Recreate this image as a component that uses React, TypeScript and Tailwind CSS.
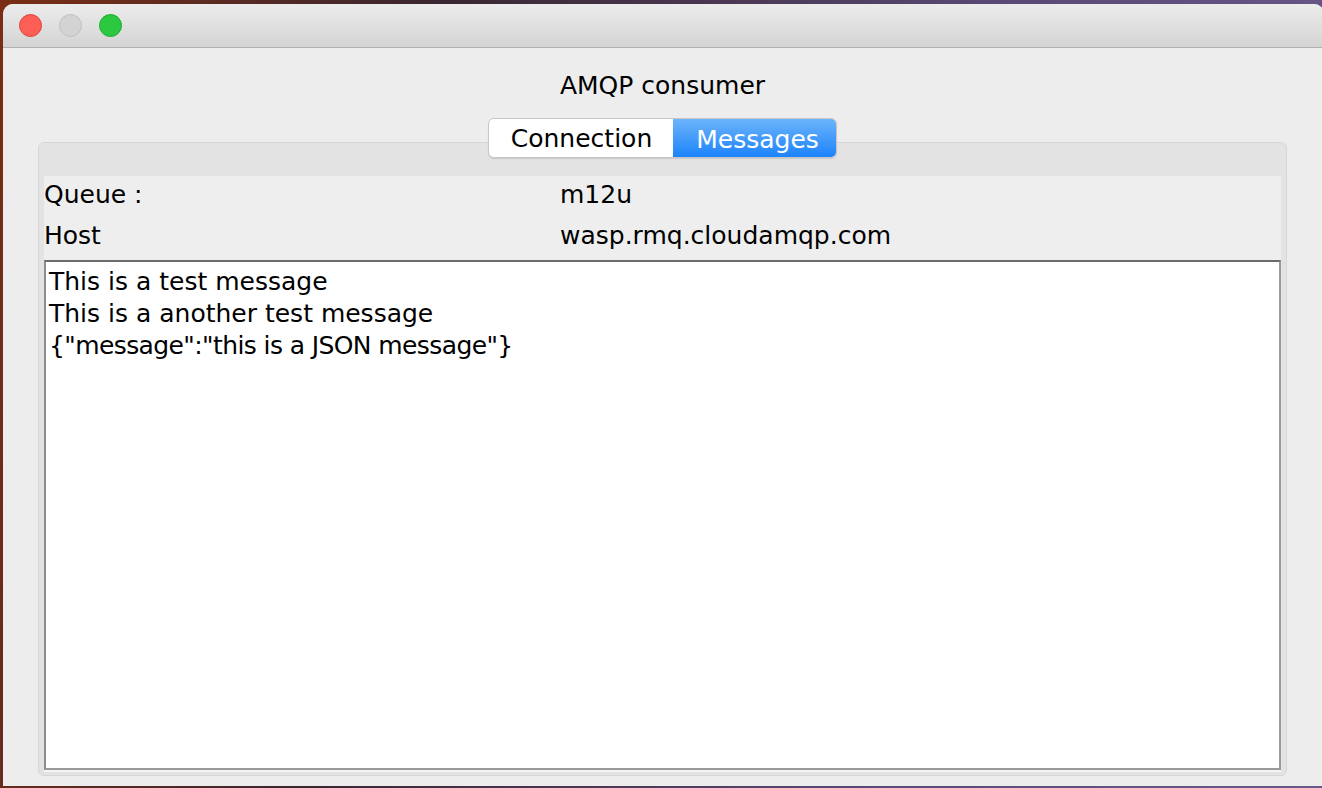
import React from 'react';

// Ventana de escritorio "AMQP consumer" con la pestaña Messages activa

const rows = [
  { label: 'Queue :', value: 'm12u' },
  { label: 'Host', value: 'wasp.rmq.cloudamqp.com' },
];

const messages = [
  'This is a test message',
  'This is a another test message',
  '{"message":"this is a JSON message"}',
];

function TrafficLights() {
  return (
    <div className="flex items-center gap-[17px] pl-[16px]">
      <span className="w-[23px] h-[23px] rounded-full bg-[#fd5f57] border border-[#e0443b]" />
      <span className="w-[23px] h-[23px] rounded-full bg-[#d3d3d3] border border-[#c0c0c0]" />
      <span className="w-[23px] h-[23px] rounded-full bg-[#2bc840] border border-[#1eaa2f]" />
    </div>
  );
}

export default function App() {
  return (
    <div className="w-[1322px] h-[788px] overflow-hidden bg-[linear-gradient(100deg,#7a2e14_0%,#3a2630_30%,#5b4a78_70%,#6a5a8a_100%)] pt-[4px] pl-[3px] font-['DejaVu_Sans','Liberation_Sans',sans-serif] text-black">
      <div className="w-[1321px] h-[782px] rounded-t-[10px] overflow-hidden bg-[#ededed] flex flex-col">
        {/* Barra de título */}
        <div className="h-[44px] shrink-0 flex items-center bg-[linear-gradient(#ececec,#d4d4d4)] border-b border-[#b1b1b1]">
          <TrafficLights />
        </div>

        {/* Contenido */}
        <div className="flex-1 flex flex-col pt-[23px] pb-[10px]">
          <h1 className="text-[25px] leading-[30px] text-center font-normal -ml-[2px]">AMQP consumer</h1>

          <div className="relative z-10 mt-[17px] flex justify-center -ml-[2px]">
            <div className="flex h-[40px] rounded-[6px] border border-[#c6c6c6] shadow-[0_1px_1px_rgba(0,0,0,0.12)] overflow-hidden text-[25px] leading-none">
              <button className="w-[184px] bg-white flex items-center justify-center pt-[1px] pl-[1px]">Connection</button>
              <button className="w-[163px] bg-[linear-gradient(#6cb4fb,#1c83fb)] text-white flex items-center justify-center pt-[2px] pl-[6px]">
                Messages
              </button>
            </div>
          </div>

          <div className="-mt-[16px] ml-[35px] w-[1249px] flex-1 flex flex-col rounded-[6px] border border-[#d6d6d6] bg-[#e3e3e3] px-[5px] pb-[3px]">
            <div className="h-[33px] shrink-0" />
            <div className="bg-[#eeeeee] text-[25px]">
              {rows.map((row) => (
                <div key={row.label} className="h-[41px] flex items-center pb-[4px]">
                  <span className="w-[516px]">{row.label}</span>
                  <span>{row.value}</span>
                </div>
              ))}
            </div>
            <div className="bg-[#eeeeee] h-[2px] shrink-0" />
            <div className="flex-1 bg-white border-2 border-t-[#6b6b6b] border-l-[#8c8c8c] border-r-[#9a9a9a] border-b-[#9a9a9a] pl-[3px] pt-[4px] text-[25px] leading-[32px]">
              {messages.map((m, i) => (
                <div key={m} className={i === 2 ? 'tracking-[-0.6px]' : ''}>
                  {m}
                </div>
              ))}
            </div>
            <div className="h-[2px] bg-[#f4f4f4] shrink-0" />
          </div>
        </div>
      </div>
    </div>
  );
}
